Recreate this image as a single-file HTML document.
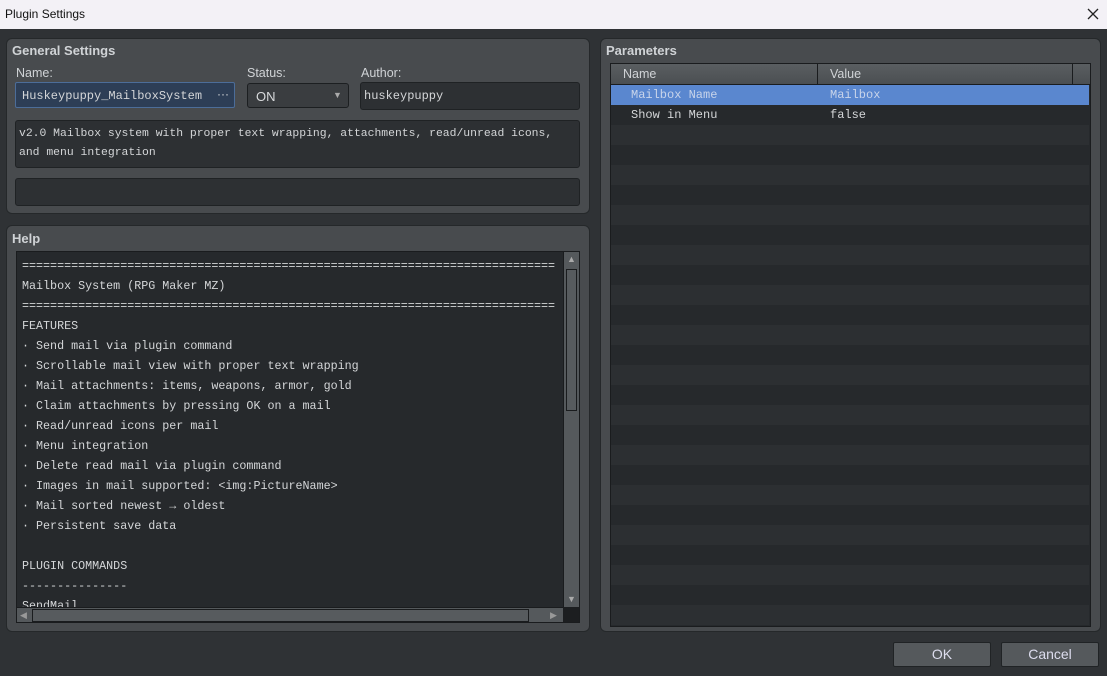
<!DOCTYPE html><html><head><style>
*{box-sizing:border-box;margin:0;padding:0}
body{width:1107px;height:676px;background:#2f3235;position:relative;overflow:hidden;font-family:"Liberation Sans",sans-serif;color:#d8dadc}
.a{position:absolute}
.title{left:0;top:0;width:1107px;height:29px;background:#f3f1f6;color:#111;font-size:12px;padding:7px 5px}
.panel{background:#484b4e;border:1px solid #25282a;border-radius:6px}
.ph{font-weight:bold;font-size:13px;color:#d0d3d6}
.lbl{font-size:12.5px;color:#d0d3d6}
.fld{background:#2d3033;border:1px solid #1f2224;border-radius:3px}
.mono{font-family:"Liberation Mono",monospace;font-size:11.7px;color:#d4d6d8}
.help div{height:20px;line-height:20px;white-space:pre}
.row{left:0;width:478px;height:20px}
.btn{background:#55595c;border:1px solid #202325;border-radius:2px;font-size:14px;color:#dde;text-align:center;line-height:22px}
</style></head><body>
<div class="a title">Plugin Settings</div>
<svg class="a" style="left:1087px;top:8px" width="12" height="12"><path d="M1 1L11 11M11 1L1 11" stroke="#222" stroke-width="1.3"/></svg>

<div class="a panel" style="left:6px;top:38px;width:584px;height:176px"></div>
<div class="a ph" style="left:12px;top:43px">General Settings</div>
<div class="a lbl" style="left:16px;top:66px">Name:</div>
<div class="a lbl" style="left:247px;top:66px">Status:</div>
<div class="a lbl" style="left:361px;top:66px">Author:</div>
<div class="a" style="left:15px;top:82px;width:220px;height:26px;background:#2d3e56;border:1px solid #4c6d99;border-radius:2px"></div>
<div class="a mono" style="left:22px;top:89px;font-size:12px">Huskeypuppy_MailboxSystem</div>
<div class="a" style="left:217px;top:87px;font-size:12px">···</div>
<div class="a fld" style="left:247px;top:83px;width:102px;height:25px;background:#3a3d40;border-color:#1c1f21"></div>
<div class="a" style="left:256px;top:89px;font-size:13px">ON</div>
<div class="a" style="left:333px;top:90px;font-size:9px;color:#aaa">▼</div>
<div class="a fld" style="left:360px;top:82px;width:220px;height:28px"></div>
<div class="a mono" style="left:364px;top:89px;font-size:12px">huskeypuppy</div>
<div class="a fld" style="left:15px;top:120px;width:565px;height:48px"></div>
<div class="a mono" style="left:19px;top:125px;line-height:19px;font-size:11.4px">v2.0 Mailbox system with proper text wrapping, attachments, read/unread icons,<br>and menu integration</div>
<div class="a fld" style="left:15px;top:178px;width:565px;height:28px"></div>

<div class="a panel" style="left:6px;top:225px;width:584px;height:407px"></div>
<div class="a ph" style="left:12px;top:231px">Help</div>
<div class="a" style="left:16px;top:251px;width:564px;height:372px;background:#26292c;border:1px solid #1a1c1e;overflow:hidden">
<div class="a mono help" style="left:5px;top:4px">
<div>============================================================================</div>
<div>Mailbox System (RPG Maker MZ)</div>
<div>============================================================================</div>
<div>FEATURES</div>
<div>· Send mail via plugin command</div>
<div>· Scrollable mail view with proper text wrapping</div>
<div>· Mail attachments: items, weapons, armor, gold</div>
<div>· Claim attachments by pressing OK on a mail</div>
<div>· Read/unread icons per mail</div>
<div>· Menu integration</div>
<div>· Delete read mail via plugin command</div>
<div>· Images in mail supported: &lt;img:PictureName&gt;</div>
<div>· Mail sorted newest → oldest</div>
<div>· Persistent save data</div>
<div> </div>
<div>PLUGIN COMMANDS</div>
<div>---------------</div>
<div>SendMail</div>
</div>
<div class="a" style="left:546px;top:0;width:16px;height:355px;background:#55595c;border-left:1px solid #1a1c1e"></div>
<div class="a" style="left:549px;top:17px;width:11px;height:142px;border:1px solid #1a1c1e;background:#575b5e"></div>
<div class="a" style="left:550px;top:2px;font-size:9px;color:#aaa">▲</div>
<div class="a" style="left:550px;top:342px;font-size:9px;color:#aaa">▼</div>
<div class="a" style="left:0;top:355px;width:546px;height:16px;background:#55595c;border-top:1px solid #1a1c1e"></div>
<div class="a" style="left:15px;top:357px;width:497px;height:13px;border:1px solid #1a1c1e;background:#575b5e"></div>
<div class="a" style="left:3px;top:358px;font-size:9px;color:#999">◀</div>
<div class="a" style="left:533px;top:358px;font-size:9px;color:#999">▶</div>
<div class="a" style="left:546px;top:355px;width:18px;height:17px;background:#1c1e20"></div>
</div>

<div class="a panel" style="left:600px;top:38px;width:501px;height:594px"></div>
<div class="a ph" style="left:606px;top:43px">Parameters</div>
<div class="a" style="left:610px;top:63px;width:481px;height:564px;background:#26292c;border:1px solid #1a1c1e;overflow:hidden">
<div class="a" style="left:0;top:0;width:479px;height:21px;background:linear-gradient(#5a5e61,#4b4f52);border-bottom:1px solid #1a1c1e"></div>
<div class="a" style="left:206px;top:0;width:1px;height:21px;background:#1a1c1e"></div>
<div class="a" style="left:461px;top:0;width:1px;height:21px;background:#1a1c1e"></div>
<div class="a lbl" style="left:12px;top:3px">Name</div>
<div class="a lbl" style="left:219px;top:3px">Value</div>
<div class="a row" style="top:21px;background:#5a87cf"></div>
<div class="a row" style="top:41px;background:#26292c"></div>
<div class="a" style="left:0;top:61px;width:478px;height:500px;background:repeating-linear-gradient(#2c2f32 0 20px,#26292c 20px 40px)"></div>
<div class="a mono" style="left:20px;top:24px;font-size:12px;color:#c8d4ea">Mailbox Name</div>
<div class="a mono" style="left:219px;top:24px;font-size:12px;color:#c8d4ea">Mailbox</div>
<div class="a mono" style="left:20px;top:44px;font-size:12px">Show in Menu</div>
<div class="a mono" style="left:219px;top:44px;font-size:12px">false</div>
</div>

<div class="a btn" style="left:893px;top:642px;width:98px;height:25px">OK</div>
<div class="a btn" style="left:1001px;top:642px;width:98px;height:25px">Cancel</div>
</body></html>
